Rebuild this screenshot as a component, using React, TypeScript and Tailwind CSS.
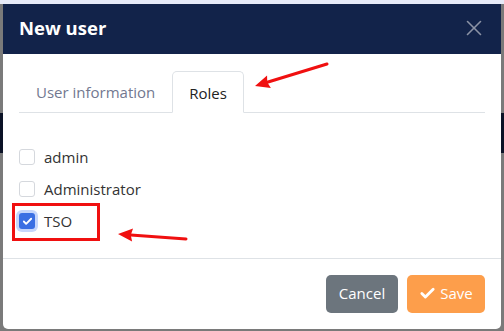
import React from 'react';
import { X, Check } from 'lucide-react';

const roles = [
  { name: 'admin', checked: false },
  { name: 'Administrator', checked: false },
  { name: 'TSO', checked: true },
];

const Arrow: React.FC<{ x1: number; y1: number; x2: number; y2: number; className: string }> = ({ x1, y1, x2, y2, className }) => {
  const ang = Math.atan2(y2 - y1, x2 - x1);
  const len = 16;
  const spread = 0.42;
  const ax = x2 - len * Math.cos(ang - spread);
  const ay = y2 - len * Math.sin(ang - spread);
  const bx = x2 - len * Math.cos(ang + spread);
  const by = y2 - len * Math.sin(ang + spread);
  const mx = x2 - len * 0.8 * Math.cos(ang);
  const my = y2 - len * 0.8 * Math.sin(ang);
  return (
    <svg className={className} width="504" height="331" viewBox="0 0 504 331">
      <line x1={x1} y1={y1} x2={mx} y2={my} stroke="#f01010" strokeWidth="3" strokeLinecap="round" />
      <polygon points={`${x2},${y2} ${ax},${ay} ${mx},${my} ${bx},${by}`} fill="#f01010" />
    </svg>
  );
};

export default function App() {
  return (
    <div className="relative w-[504px] h-[331px] overflow-hidden bg-[#7a7a7a] font-['Open_Sans','Noto_Sans',sans-serif]">
      {/* backdrop strips */}
      <div className="absolute left-0 top-0 w-full h-[4px] bg-[#e6eaf8]" />
      <div className="absolute left-0 top-[113px] w-full h-[40px] bg-[#0b1226]" />

      {/* modal */}
      <div className="absolute left-[3px] top-[4px] w-[498px] h-[325px] bg-white rounded-b-[5px] flex flex-col">
        <div className="h-[50px] bg-[#12234a] flex items-center justify-between pl-[16px] pr-[14px]">
          <h2 className="text-white font-bold text-[18.5px] leading-none -mt-[2px]">New user</h2>
          <X size={26} strokeWidth={1.5} className="text-[#8b93a5] -mt-[2px]" />
        </div>

        <div className="flex-1 px-[16px] pt-[18px]">
          <div className="flex border-b border-[#dee2e6] h-[41px] items-end">
            <div className="px-[17px] h-[41px] pt-[2px] flex items-center text-[15px] text-[#727890]">User information</div>
            <div className="px-[16px] h-[42px] pt-[2px] -mb-px flex items-center text-[15px] text-[#222] bg-white border border-[#dee2e6] border-b-white rounded-t-[5px]">
              Roles
            </div>
          </div>

          <div className="flex flex-col gap-[16px] pt-[36px]">
            {roles.map((r) => (
              <label key={r.name} className="flex items-center gap-[9px] h-[16px]">
                {r.checked ? (
                  <span className="shrink-0 w-[16px] h-[16px] rounded-[3px] bg-[#3b6fe3] flex items-center justify-center ring-[3px] ring-[#c6d6fb]">
                    <Check size={11} strokeWidth={4} className="text-white" />
                  </span>
                ) : (
                  <span className="shrink-0 w-[16px] h-[16px] rounded-[3px] border border-[#d5d8dd] bg-white" />
                )}
                <span className="text-[15px] text-[#333] leading-none">{r.name}</span>
              </label>
            ))}
          </div>
        </div>

        <div className="border-t border-[#dee2e6] h-[71px] flex items-center justify-end gap-[9px] pr-[16px] pb-[1px]">
          <button className="h-[38px] w-[72px] rounded-[5px] bg-[#6c757d] text-white text-[15px]">Cancel</button>
          <button className="h-[38px] w-[78px] justify-center rounded-[5px] bg-[#fd9e4b] text-white text-[15px] flex items-center gap-[4px]">
            <Check size={17} strokeWidth={4} />
            Save
          </button>
        </div>
      </div>

      {/* annotations */}
      <div className="absolute left-[12px] top-[203px] w-[88px] h-[38px] border-[3px] border-[#f01010]" />
      <Arrow x1={327} y1={64} x2={255} y2={86} className="absolute left-0 top-0 pointer-events-none" />
      <Arrow x1={186} y1={239} x2={118} y2={234} className="absolute left-0 top-0 pointer-events-none" />
    </div>
  );
}
